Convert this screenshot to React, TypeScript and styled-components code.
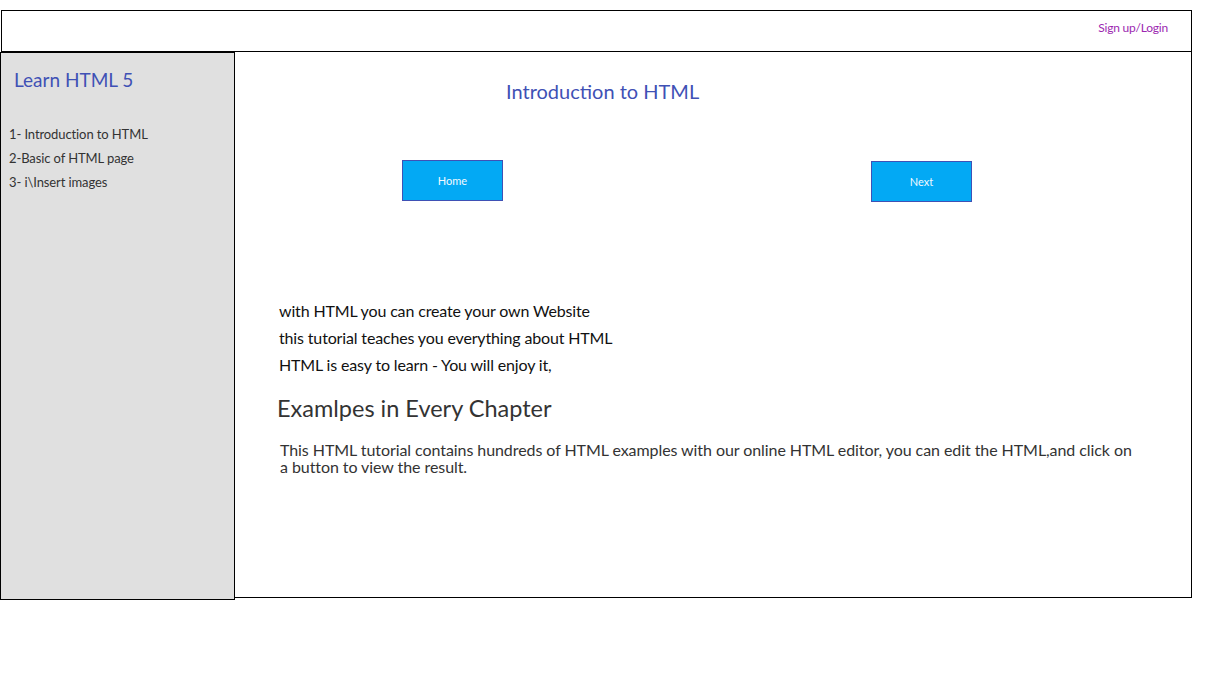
import React from "react";
import styled, { createGlobalStyle } from "styled-components";

const GlobalStyle = createGlobalStyle`
  html, body { margin: 0; padding: 0; background: #fff; }
  body { font-family: Lato, "Open Sans", sans-serif; }
  * { box-sizing: border-box; }
`;

const Page = styled.div`
  width: 1231px;
  padding-top: 10px;
`;

const Header = styled.header`
  margin-left: 1px;
  width: 1191px;
  height: 42px;
  border: 1px solid #000;
  display: flex;
  justify-content: flex-end;
  align-items: flex-start;
  padding: 10px 23px 0 0;
`;

const AuthLink = styled.a`
  font-size: 12px;
  line-height: 14px;
  letter-spacing: -0.2px;
  color: #9c27b0;
  text-decoration: none;
  cursor: pointer;
`;

const Body = styled.div`
  display: flex;
  align-items: flex-start;
  margin-top: -1px;
`;

const Sidebar = styled.aside`
  width: 235px;
  height: 548px;
  margin-top: 1px;
  border: 1px solid #000;
  background: #e0e0e0;
  padding: 15px 0 0 8px;
  position: relative;
  z-index: 1;
`;

const SideTitle = styled.h2`
  margin: 0 0 30px 5px;
  font-size: 19px;
  font-weight: 400;
  line-height: 24px;
  color: #3f51b5;
`;

const SideList = styled.ul`
  list-style: none;
  margin: 0;
  padding: 0;
`;

const SideItem = styled.li`
  font-size: 13px;
  line-height: 24px;
  letter-spacing: -0.1px;
  color: #333;
`;

const Main = styled.main`
  width: 958px;
  height: 547px;
  margin-left: -1px;
  border: 1px solid #000;
  display: flex;
  flex-direction: column;
  align-items: flex-start;
`;

const PageTitle = styled.h1`
  margin: 27px 0 0 271px;
  font-size: 20px;
  font-weight: 400;
  line-height: 24px;
  color: #3f51b5;
`;

const ButtonRow = styled.div`
  display: flex;
  align-items: flex-start;
  margin: 57px 0 0 167px;
`;

const NavButton = styled.button<{ $offsetLeft?: number; $offsetTop?: number }>`
  width: 101px;
  height: 41px;
  margin-left: ${(p) => p.$offsetLeft ?? 0}px;
  margin-top: ${(p) => p.$offsetTop ?? 0}px;
  background: #03a9f4;
  border: 1px solid #3f51b5;
  color: #f2f9ff;
  font-family: inherit;
  font-size: 11px;
  padding: 0;
  cursor: pointer;
`;

const Intro = styled.div`
  margin: 95px 0 0 44px;
`;

const IntroLine = styled.p`
  margin: 0;
  font-size: 16px;
  line-height: 27px;
  letter-spacing: -0.15px;
  color: #111;
`;

const SectionTitle = styled.h2`
  margin: 15px 0 0 42px;
  font-size: 23.5px;
  font-weight: 400;
  line-height: 30px;
  color: #333;
`;

const Paragraph = styled.p`
  margin: 18px 0 0 45px;
  width: 862px;
  font-size: 16px;
  line-height: 17px;
  letter-spacing: -0.07px;
  color: #333;
`;

export default function App() {
  return (
    <>
      <GlobalStyle />
      <Page>
        <Header>
          <AuthLink>Sign up/Login</AuthLink>
        </Header>
        <Body>
          <Sidebar>
            <SideTitle>Learn HTML 5</SideTitle>
            <SideList>
              <SideItem>1- Introduction to HTML</SideItem>
              <SideItem>2-Basic of HTML page</SideItem>
              <SideItem>3- i\Insert images</SideItem>
            </SideList>
          </Sidebar>
          <Main>
            <PageTitle>Introduction to HTML</PageTitle>
            <ButtonRow>
              <NavButton>Home</NavButton>
              <NavButton $offsetLeft={368} $offsetTop={1}>
                Next
              </NavButton>
            </ButtonRow>
            <Intro>
              <IntroLine>with HTML you can create your own Website</IntroLine>
              <IntroLine>this tutorial teaches you everything about HTML</IntroLine>
              <IntroLine>HTML is easy to learn - You will enjoy it,</IntroLine>
            </Intro>
            <SectionTitle>Examlpes in Every Chapter</SectionTitle>
            <Paragraph>
              This HTML tutorial contains hundreds of HTML examples with our online HTML editor, you can edit the
              HTML,and click on a button to view the result.
            </Paragraph>
          </Main>
        </Body>
      </Page>
    </>
  );
}
